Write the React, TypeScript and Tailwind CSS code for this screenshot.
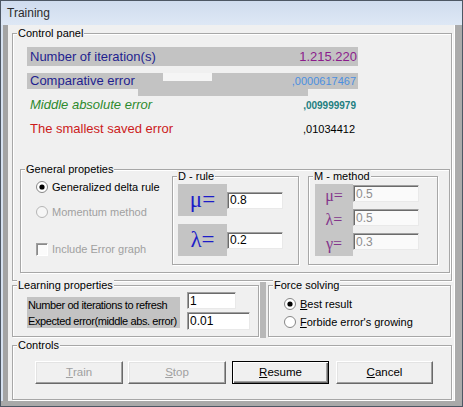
import React from 'react'
import clsx from 'clsx'

const font = "font-['Liberation_Sans',Arial,sans-serif]"

function Group({ label, className, children }: { label: string; className?: string; children?: React.ReactNode }) {
  return (
    <div className={clsx('relative border border-[#a7a7a7] shadow-[inset_1px_1px_0_#fff,1px_1px_0_#fff]', className)}>
      <span className="absolute -top-[7px] left-[4px] bg-[#f0f0f0] px-[1px] text-[11px] leading-[13px] text-black">
        {label}
      </span>
      {children}
    </div>
  )
}

function Field({ value, disabled, className }: { value: string; disabled?: boolean; className?: string }) {
  return (
    <div
      className={clsx(
        'flex items-center border border-t-[#a0a0a0] border-l-[#a0a0a0] border-r-[#e9e9e9] border-b-[#e9e9e9] pl-[2px] text-[12px] leading-none shadow-[inset_1px_1px_0_#6b6b6b]',
        disabled ? 'bg-[#fafafa] text-[#8e8e8e]' : 'bg-white text-black',
        className,
      )}
    >
      {value}
    </div>
  )
}

function Radio({ checked, disabled }: { checked?: boolean; disabled?: boolean }) {
  return (
    <svg width="12" height="12" viewBox="0 0 12 12" className="shrink-0">
      <circle cx="6" cy="6" r="5.5" fill={disabled ? '#f6f6f6' : '#fff'} stroke={disabled ? '#b5b5b5' : '#858585'} />
      {checked && <circle cx="6" cy="6" r="2.6" fill="#000" />}
    </svg>
  )
}

function Button({ first, rest, disabled, primary, className }: { first: string; rest: string; disabled?: boolean; primary?: boolean; className?: string }) {
  return (
    <div
      className={clsx(
        'flex h-[23px] items-center justify-center bg-[#f0f0f0] text-[11.5px]',
        primary
          ? 'border border-black shadow-[inset_1px_1px_0_#fff,inset_-1px_-1px_0_#696969,inset_-2px_-2px_0_#a0a0a0]'
          : 'border border-t-white border-l-white border-r-[#696969] border-b-[#696969] shadow-[inset_-1px_-1px_0_#a0a0a0,inset_1px_1px_0_#e3e3e3]',
        disabled ? 'text-[#a0a0a0]' : 'text-black',
        className,
      )}
    >
      <span className="underline">{first}</span>
      {rest}
    </div>
  )
}

export default function App() {
  return (
    <div className={clsx('flex h-[407px] w-[463px] flex-col border border-[#4d5764] bg-[#a9a9a9]', font)}>
      {/* Title bar */}
      <div className="flex h-[24px] shrink-0 items-center bg-gradient-to-b from-[#cfdcee] to-[#dee8f5] pl-[6px] text-[12px] text-[#2b2b2b]">
        Training
      </div>

      <div className="flex h-[376px] shrink-0">
        {/* left frame */}
        <div className="w-[7px] border-l-2 border-[#d6e1f0] bg-[#a4a4a4]" />

        {/* client area */}
        <div className="flex w-[446px] flex-col bg-[#f0f0f0]">
          {/* Control panel */}
          <Group label="Control panel" className="ml-[4px] mt-[8px] flex h-[248px] w-[440px] flex-col">
            <div className="ml-[14px] mt-[13px] flex h-[19px] w-[331px] items-center justify-between bg-[#c3c3c3] pl-[3px] pr-[1px]">
              <span className="text-[13px] text-[#1f1f8f]">Number of iteration(s)</span>
              <span className="text-[13px] text-[#8c1c8c]">1.215.220</span>
            </div>

            <div className="relative ml-[14px] mt-[7px] flex h-[16px] w-[331px] items-center justify-between bg-[#c3c3c3] pl-[3px] pr-[2px]">
              <span className="text-[13px] text-[#1f1f8f]">Comparative error</span>
              <span className="relative text-[11px] text-[#4b8fe0]">,0000617467</span>
              <div className="absolute left-[136px] top-0 h-[8px] w-[49px] bg-[#f5f5f5]" />
              <div className="absolute left-[111px] top-[16px] h-[7px] w-[170px] bg-[#c3c3c3]" />
            </div>

            <div className="ml-[14px] mt-[8px] flex h-[16px] w-[331px] items-center justify-between pl-[3px] pr-[2px]">
              <span className="text-[13px] italic text-[#2d8a2d]">Middle absolute error</span>
              <span className="text-[10px] font-bold text-[#237f80]">,009999979</span>
            </div>

            <div className="ml-[14px] mt-[8px] flex h-[16px] w-[331px] items-center justify-between pl-[3px] pr-[3px]">
              <span className="text-[13px] text-[#cc1b1b]">The smallest saved error</span>
              <span className="text-[11px] text-black">,01034412</span>
            </div>

            {/* General properties */}
            <Group label="General propeties" className="ml-[7px] mt-[32px] flex h-[104px] w-[430px]">
              <div className="flex w-[151px] flex-col pl-[15px] text-[11px]">
                <div className="mt-[11px] flex h-[12px] items-center gap-[4px] text-black">
                  <Radio checked />
                  <span>Generalized delta rule</span>
                </div>
                <div className="mt-[13px] flex h-[12px] items-center gap-[4px] text-[#a0a0a0]">
                  <Radio disabled />
                  <span>Momentum method</span>
                </div>
                <div className="mt-[25px] flex h-[13px] items-center gap-[4px] text-[#a0a0a0]">
                  <div className="h-[13px] w-[12px] shrink-0 border border-t-[#a0a0a0] border-l-[#a0a0a0] border-r-white border-b-white bg-[#fbfbfb] shadow-[inset_1px_1px_0_#8a8a8a]" />
                  <span>Include Error graph</span>
                </div>
              </div>

              <Group label="D - rule" className="mt-[6px] flex h-[89px] w-[127px] flex-col gap-[8px] pl-[5px] pt-[7px]">
                <div className="flex items-center">
                  <div className="flex h-[32px] w-[49px] items-center justify-center bg-[#c4c4c4] font-['Liberation_Serif',serif] text-[23px] text-[#1d1dc8]">
                    μ=
                  </div>
                  <Field value="0.8" className="h-[17px] w-[56px]" />
                </div>
                <div className="flex items-center">
                  <div className="flex h-[32px] w-[49px] items-center justify-center bg-[#c4c4c4] font-['Liberation_Serif',serif] text-[23px] text-[#1d1dc8]">
                    λ=
                  </div>
                  <Field value="0.2" className="h-[17px] w-[56px]" />
                </div>
              </Group>

              <Group label="M - method" className="ml-[9px] mt-[6px] flex h-[89px] w-[130px] flex-col pl-[6px] pt-[7px]">
                {[
                  ['μ=', '0.5'],
                  ['λ=', '0.5'],
                  ['γ=', '0.3'],
                ].map(([sym, val]) => (
                  <div key={sym} className="flex h-[24px]">
                    <div className="flex w-[38px] items-center justify-center bg-[#c6c6c6] font-['Liberation_Serif',serif] text-[16px] text-[#84368c]">
                      {sym}
                    </div>
                    <Field value={val} disabled className="mt-[1px] h-[17px] w-[66px]" />
                  </div>
                ))}
              </Group>
            </Group>
          </Group>

          {/* Learning + Force solving */}
          <div className="flex h-[57px]">
            <Group label="Learning properties" className="ml-[4px] mt-[4px] flex h-[52px] w-[247px]">
              <div className="ml-[14px] mt-[11px] flex h-[31px] w-[153px] flex-col whitespace-nowrap bg-[#c3c3c3] pl-[1px] text-[11px] leading-[16px] tracking-[-0.4px] text-black">
                <span>Number od iterations to refresh</span>
                <span>Expected error(middle abs. error)</span>
              </div>
              <div className="ml-[7px] mt-[6px] flex flex-col">
                <Field value="1" className="h-[17px] w-[49px]" />
                <Field value="0.01" className="mt-[3px] h-[18px] w-[63px]" />
              </div>
            </Group>

            <div className="ml-[1px] h-full w-[6px] bg-[#b8b8b8]" />

            <Group label="Force solving" className="ml-[2px] mt-[4px] flex h-[52px] w-[183px] flex-col pl-[15px] text-[11px] text-black">
              <div className="mt-[12px] flex h-[12px] items-center gap-[4px]">
                <Radio checked />
                <span>
                  <span className="underline">B</span>est result
                </span>
              </div>
              <div className="mt-[6px] flex h-[12px] items-center gap-[4px]">
                <Radio />
                <span>
                  <span className="underline">F</span>orbide error's growing
                </span>
              </div>
            </Group>
          </div>

          {/* Controls */}
          <Group label="Controls" className="ml-[4px] mt-[7px] flex h-[55px] w-[440px] pl-[22px] pt-[15px]">
            <Button first="T" rest="rain" disabled className="w-[88px]" />
            <Button first="S" rest="top" disabled className="ml-[5px] w-[98px]" />
            <Button first="R" rest="esume" primary className="ml-[6px] w-[97px]" />
            <Button first="C" rest="ancel" className="ml-[7px] w-[97px]" />
          </Group>
        </div>

        {/* right frame */}
        <div className="w-[8px] border-l border-white bg-[#ababab]" />
      </div>
    </div>
  )
}
